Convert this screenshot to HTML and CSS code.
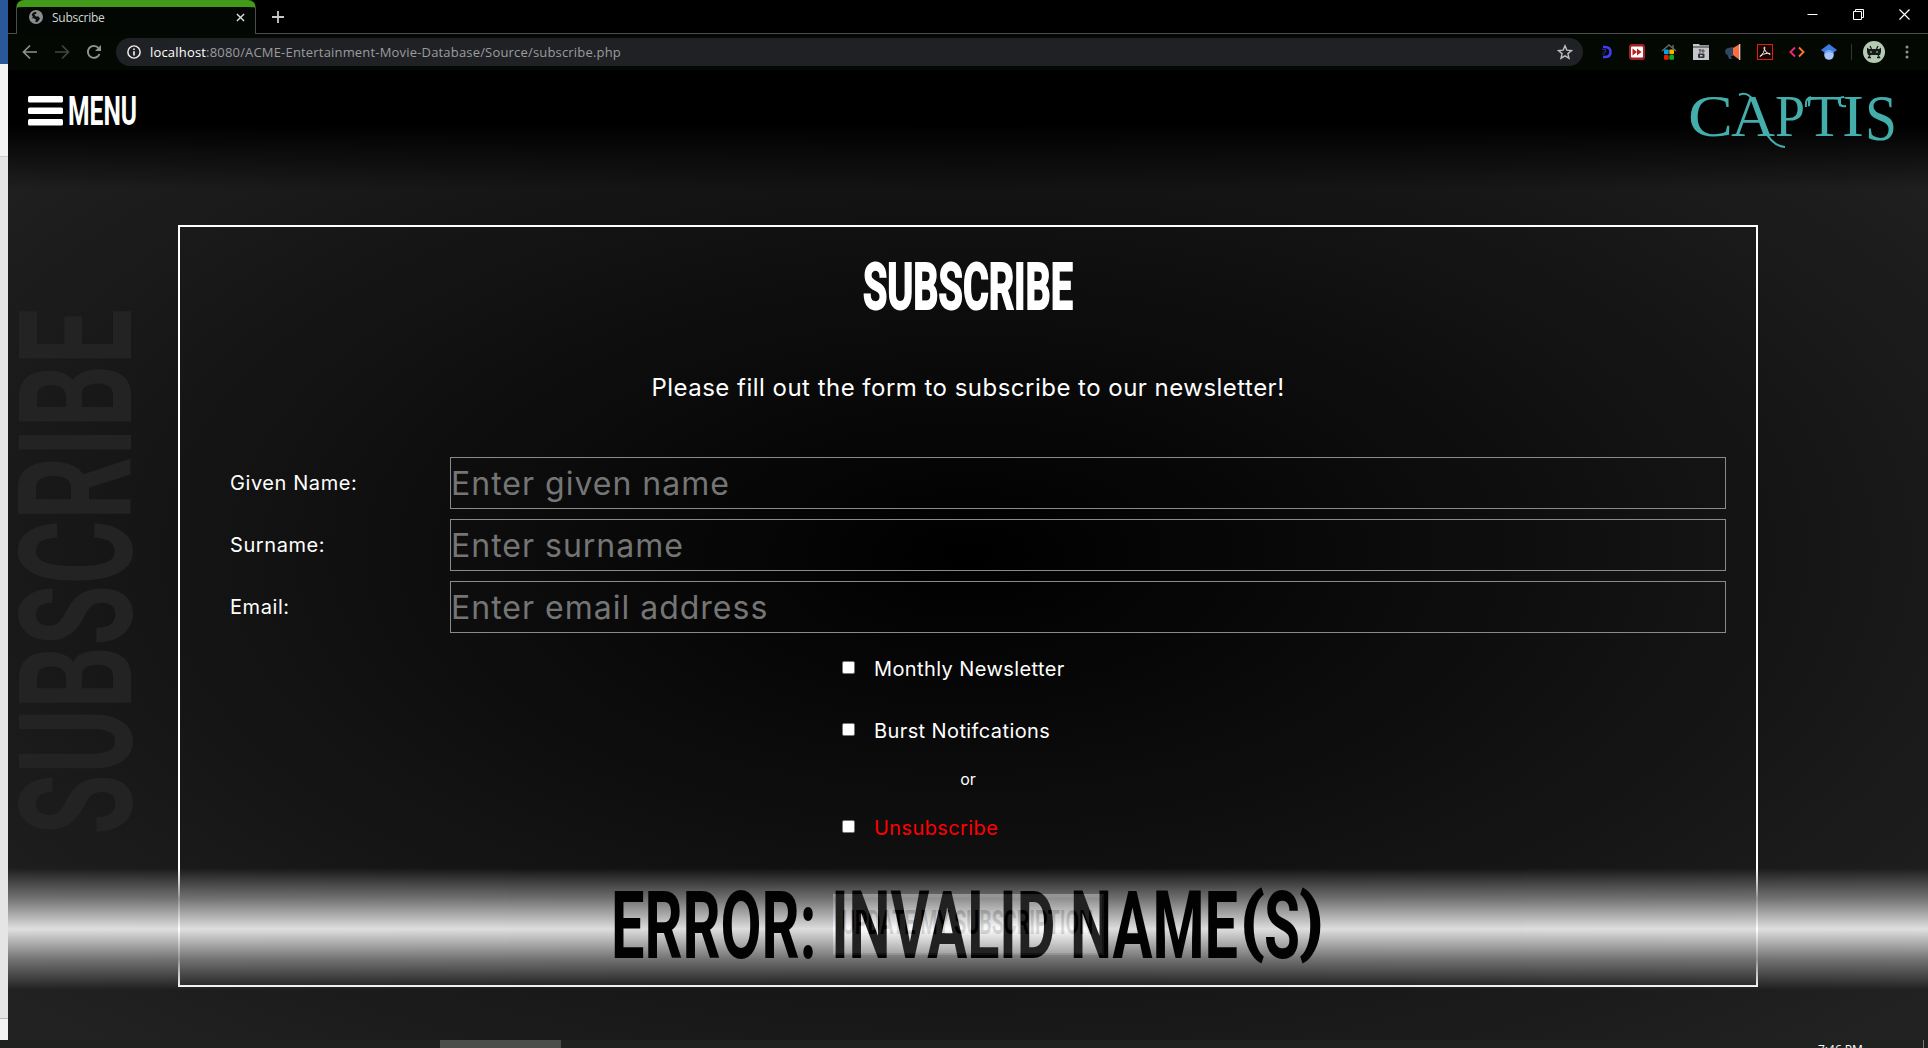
FILE: index.html
```html
<!DOCTYPE html>
<html lang="en">
<head>
<meta charset="utf-8">
<title>Subscribe</title>
<link rel="stylesheet" href="styles.css">
</head>
<body>
<div class="desktop">
  <div class="behind"><div class="behind-title"></div><div class="behind-ribbon"></div><div class="behind-doc"></div><div class="behind-status"></div></div>
  <div class="browser">
    <div class="tabstrip">
      <div class="tab">
        <svg class="globe" viewBox="0 0 16 16" width="14" height="14"><circle cx="8" cy="8" r="8" fill="#8b8d90"/><path d="M3 5Q4.500 2 8 2L8.500 4 6 5.500 8 7.500 11 7.500 12.500 10 10 13.500 7 14 8 11 5.500 9.500 3 9.500 4.500 8z" fill="#0c0f0c"/></svg>
        <span class="tab-title">Subscribe</span>
        <svg class="tab-x" viewBox="0 0 10 10" width="9" height="9"><path d="M1 1l8 8M9 1l-8 8" stroke="#ddd" stroke-width="1.600"/></svg>
      </div>
      <svg class="plus" viewBox="0 0 12 12" width="12" height="12"><path d="M6 0v12M0 6h12" stroke="#c8c8c8" stroke-width="1.800"/></svg>
      <div class="caption">
        <svg viewBox="0 0 11 11" width="11" height="11"><path d="M.5 5.500h10" stroke="#fff"/></svg>
        <svg viewBox="0 0 11 11" width="11" height="11"><path d="M.5 2.500h8v8h-8zM2.500 2.500v-2h8v8h-2" stroke="#fff" fill="none"/></svg>
        <svg viewBox="0 0 11 11" width="11" height="11"><path d="M.5 .5l10 10M10.500 .5l-10 10" stroke="#fff" stroke-width="1.200"/></svg>
      </div>
    </div>
    <div class="toolbar">
      <svg class="nav" viewBox="0 0 16 16" width="16" height="16"><path d="M15 8H2M8 1.500L1.500 8 8 14.500" stroke="#8f918f" stroke-width="1.700" fill="none"/></svg>
      <svg class="nav" viewBox="0 0 16 16" width="16" height="16"><path d="M1 8h13M8 1.500L14.500 8 8 14.500" stroke="#434543" stroke-width="1.700" fill="none"/></svg>
      <svg class="nav" viewBox="0 0 16 16" width="16" height="16"><path d="M13.500 10A6 6 0 1 1 12.500 4" stroke="#929492" stroke-width="1.900" fill="none"/><path d="M15 1v6H9z" fill="#929492"/></svg>
      <div class="omnibox">
        <svg viewBox="0 0 16 16" width="14" height="14"><circle cx="8" cy="8" r="7" fill="none" stroke="#eee" stroke-width="1.700"/><path d="M8 7v5M8 4v1.800" stroke="#eee" stroke-width="1.900"/></svg>
        <span class="url"><b>localhost</b>:8080/ACME-Entertainment-Movie-Database/Source/subscribe.php</span>
        <svg viewBox="0 0 16 16" width="16" height="16"><path d="M8 1.800l1.800 4.300 4.700.4-3.600 3.100 1.100 4.600L8 11.800l-4 2.400 1.100-4.600L1.500 6.500l4.700-.4z" fill="none" stroke="#bdbfc1" stroke-width="1.400"/></svg>
      </div>
      <div class="extensions">
        <svg viewBox="0 0 16 16" width="16" height="16"><path d="M6 3h2q5.500 0 5.500 5T8 13H6" fill="none" stroke="#3f3ff0" stroke-width="2.600"/><path d="M5 5.500h3.500v2.500H6M5 10h3" stroke="#2626a0" stroke-width="1.200" fill="none"/></svg>
        <svg viewBox="0 0 16 16" width="16" height="16"><rect width="16" height="16" rx="3" fill="#a31f21"/><rect x="2" y="2.500" width="12" height="11" rx="1" fill="#fff"/><path d="M3.500 4.500L8 8l-4.500 3.500zM8 4.500L12.500 8 8 11.500z" fill="#b32022"/></svg>
        <svg viewBox="0 0 16 16" width="16" height="16"><path d="M1 7l7-6 7 6M12 1v3" stroke="#666" stroke-width="1.500" fill="none"/><rect x="3" y="5.500" width="4.700" height="4.700" rx="1" fill="#00a5ee"/><rect x="8.300" y="5.500" width="4.700" height="4.700" rx="1" fill="#ffae00"/><rect x="3" y="11" width="4.700" height="4.700" rx="1" fill="#f01800"/><rect x="8.300" y="11" width="4.700" height="4.700" rx="1" fill="#00b423"/></svg>
        <svg viewBox="0 0 16 16" width="16" height="16"><path d="M0 0h6l1 1.200h9V16H0z" fill="#c5c5cb"/><path d="M0 3h16" stroke="#333"/><path d="M6 5l1 2V9M8 5L7 7M9 6h2v2H9z" stroke="#333" fill="none" stroke-width=".8"/><rect x="5" y="9.500" width="6.500" height="4.500" rx="1" fill="#333"/><path d="M7 11h2.500v1.500H7z" fill="#c5c5cb"/></svg>
        <svg viewBox="0 0 16 16" width="16" height="16"><path d="M8 3v9H6l1 3H4l-1.500-4Q0 10 0 7.500T3 4z" fill="#2f4560"/><path d="M8 4l6-3.500v15L8 11z" fill="#ff6b3d"/><path d="M14.700 0v16" stroke="#e8e8e8" stroke-width="1.200"/></svg>
        <svg viewBox="0 0 16 16" width="16" height="16"><rect x=".5" y=".5" width="15" height="15" fill="#180303" stroke="#e01f0b"/><path d="M3 12.500Q7.500 9 8 3.500 7 2 7 4.500 8.500 9 13 10.500 14 9 10.500 9.200 6 9.500 3 12.500z" stroke="#eee" fill="none"/></svg>
        <svg viewBox="0 0 16 16" width="16" height="16"><path d="M6 3.500L1.500 8 6 12.500" stroke="#f0277b" stroke-width="1.900" fill="none"/><path d="M10 3.500L14.500 8 10 12.500" stroke="#ff7424" stroke-width="1.900" fill="none"/></svg>
        <svg viewBox="0 0 16 16" width="16" height="16"><path d="M8 0l8 6-8 6-8-6z" fill="#3d7be0"/><circle cx="8" cy="11" r="4.800" fill="#a5c6fb"/><path d="M3.400 9.500a5 5 0 0 1 9.200 0L8 8z" fill="#6da0f4"/></svg>
      </div>
      <div class="divider"></div>
      <svg class="avatar" viewBox="0 0 22 22" width="22" height="22"><circle cx="11" cy="11" r="11" fill="#b4cbb3"/><path d="M4 6.500l2 1.500h10l2-1.500V11l-1 3H5l-1-3z" fill="#171a18"/><path d="M7 5l1.500 3M15 5l-1.500 3M7 14l-1.500 2.500H8M15 14l1.500 2.500H14" stroke="#171a18" stroke-width="1.300" fill="none"/><path d="M7 11h2M13 11h2" stroke="#7f9080" stroke-width="1.500"/></svg>
      <svg class="dots" viewBox="0 0 4 14" width="4" height="14"><g fill="#929492"><circle cx="2" cy="2" r="1.500"/><circle cx="2" cy="7" r="1.500"/><circle cx="2" cy="12" r="1.500"/></g></svg>
    </div>
    <main class="page">
      <header class="site-header">
        <a class="menu">
          <svg class="bars" viewBox="0 0 35 30" width="35" height="30"><g fill="#fff"><rect width="35" height="6.500" rx="1.500"/><rect y="11.500" width="35" height="6.500" rx="1.500"/><rect y="23" width="35" height="6.500" rx="1.500"/></g></svg>
          <svg class="display" width="70" height="30"><text x="0" y="29" font-size="41" textLength="69" lengthAdjust="spacingAndGlyphs">MENU</text></svg>
        </a>
        <svg class="logo" viewBox="0 0 210 60" width="210" height="60">
          <g class="logo-text"><text x="0" y="45" font-size="60" textLength="45" lengthAdjust="spacingAndGlyphs">C</text><text x="43" y="45" font-size="60" textLength="44" lengthAdjust="spacingAndGlyphs">A</text><text x="87" y="45" font-size="60" textLength="30" lengthAdjust="spacingAndGlyphs">P</text><text x="119" y="45" font-size="60" textLength="35" lengthAdjust="spacingAndGlyphs">T</text><text x="154" y="45" font-size="60" textLength="22" lengthAdjust="spacingAndGlyphs">I</text><text x="177" y="49" font-size="66" textLength="32" lengthAdjust="spacingAndGlyphs">S</text></g>
          <path class="swash" d="M51 4Q59 0 65 9M76 38Q84 55 97 56M123 6Q117 7 118 16M156 6Q150 6 151 11Q152 16 158 15"/>
        </svg>
      </header>
      <svg class="side-title display" width="126" height="530"><text transform="translate(122 525) rotate(-90)" font-size="157" textLength="526" lengthAdjust="spacingAndGlyphs">SUBSCRIBE</text></svg>
      <section class="card">
        <svg class="heading display" width="212" height="50"><text x="1" y="48" font-size="65" textLength="210" lengthAdjust="spacingAndGlyphs">SUBSCRIBE</text></svg>
        <p class="intro">Please fill out the form to subscribe to our newsletter!</p>
        <form class="form">
          <div class="row"><label class="l1">Given Name:</label><input class="p1" type="text" placeholder="Enter given name"></div>
          <div class="row"><label class="l2">Surname:</label><input class="p2" type="text" placeholder="Enter surname"></div>
          <div class="row"><label class="l3">Email:</label><input class="p3" type="text" placeholder="Enter email address"></div>
          <div class="checks">
            <div class="check"><i class="box"></i><span>Monthly Newsletter</span></div>
            <div class="check"><i class="box"></i><span>Burst Notifcations</span></div>
            <div class="or">or</div>
            <div class="check last"><i class="box"></i><span>Unsubscribe</span></div>
          </div>
          <button class="submit" type="button"><svg class="display dark" width="252" height="26"><text x="0" y="24" font-size="33" textLength="251" lengthAdjust="spacingAndGlyphs">UPDATE MY SUBSCRIPTION</text></svg></button>
        </form>
      </section>
      <div class="error"><svg class="display dark" width="712" height="90"><text x="-1" y="74" font-size="94" textLength="627" lengthAdjust="spacingAndGlyphs">ERROR: INVALID NAME</text><text class="paren" x="629" y="62" font-size="72" textLength="23" lengthAdjust="spacingAndGlyphs">(</text><text x="652" y="74" font-size="94" textLength="36" lengthAdjust="spacingAndGlyphs">S</text><text class="paren" x="688" y="62" font-size="72" textLength="23" lengthAdjust="spacingAndGlyphs">)</text></svg></div>
    </main>
  </div>
</div>
<div class="taskbar"><div class="task"></div><span class="clock">7:46 PM</span><div class="peek"></div></div>
</body>
</html>
```
FILE: styles.css
```css
* { box-sizing: border-box; }
body { margin: 0; width: 1928px; height: 1048px; overflow: hidden; background: #000; color: #fff; font-family: Inter, sans-serif; display: flex; flex-direction: column; }
svg { display: block; flex: none; }
.desktop { display: flex; height: 1040px; }
.behind { width: 8px; display: flex; flex-direction: column; background: #e5e5e5; }
.behind-title { height: 64px; background: #2a579a; }
.behind-ribbon { height: 93px; background: #f3f3f3; border-bottom: 1px solid #ccc; }
.behind-doc { flex: 1; }
.behind-status { height: 22px; background: #f3f3f3; border-top: 1px solid #bbb; }
.browser { width: 1920px; display: flex; flex-direction: column; }

.tabstrip { height: 34px; display: flex; border-bottom: 1px solid #4b4d4b; padding-left: 8px; background: #000; }
.tab { width: 240px; height: 34px; border: 1px solid #4b4d4b; border-top: 7px solid #419a1a; border-bottom: 0; border-radius: 8px 8px 0 0; background: #030703; display: flex; align-items: center; padding: 0 10px 7px 12px; }
.tab-title { flex: 1; margin-left: 9px; font: 12px "Open Sans", sans-serif; letter-spacing: -.25px; color: #d5d7d5; }
.plus { margin: 11px 0 0 16px; }
.caption { margin-left: auto; display: flex; gap: 35px; padding: 9px 18px 0 0; }

.toolbar { height: 36px; display: flex; align-items: center; background: #030803; padding-left: 14px; }
.nav { margin-right: 16px; }
.omnibox { width: 1467px; height: 28px; margin-left: -2px; border-radius: 14px; background: #202124; display: flex; align-items: center; padding: 0 10px 0 11px; }
.url { flex: 1; margin-left: 9px; font: 13px "Open Sans", sans-serif; letter-spacing: .18px; color: #9a9c9f; }
.url b { font-weight: 400; color: #fff; }
.extensions { display: flex; gap: 16px; margin-left: 14px; }
.divider { width: 1px; height: 16px; background: #333533; margin: 0 11px 0 14px; }
.dots { margin-left: 20px; }

.page { position: relative; height: 970px; background: radial-gradient(#000, #232323); display: flex; flex-direction: column; }
.site-header { height: 155px; display: flex; justify-content: space-between; background: linear-gradient(#000 0, #000 55px, transparent 120px); padding: 26px 30px 0 20px; }
.menu { display: flex; gap: 5px; height: 30px; }
.display { font-family: Roboto, sans-serif; font-weight: 700; fill: #fff; overflow: visible; }
.dark { fill: #000; }
.heading { stroke: #fff; stroke-width: 2; }
.paren { stroke: #000; stroke-width: 2; }
.logo { margin: -5px 0 0; overflow: visible; }
.logo-text { font-family: "Liberation Serif", serif; fill: #43aeac; }
.swash { fill: none; stroke: #43aeac; stroke-width: 2; }
.side-title { position: absolute; left: 1px; top: 240px; fill: #232323; }
.card { width: 1580px; height: 762px; margin-left: 170px; border: 2px solid #fff; display: flex; flex-direction: column; align-items: center; padding-top: 34px; }
.intro { margin: 60px 0 0; height: 36px; line-height: 34px; font-size: 24px; white-space: nowrap; letter-spacing: .48px; }
.form { width: 100%; margin-top: 50px; padding: 0 30px 0 50px; display: flex; flex-direction: column; gap: 10px; }
.row { display: flex; align-items: center; height: 52px; }
.row label { width: 220px; font-size: 20px; letter-spacing: .58px; }
.row input { flex: 1; height: 52px; background: transparent; border: 1px solid #8a8a8a; padding: 0; font: 32px Inter, sans-serif; letter-spacing: 1px; color: #fff; }
.row input::placeholder { color: #757575; opacity: 1; }
.checks { width: 260px; margin-left: 612px; display: flex; flex-direction: column; }
.check { height: 52px; display: flex; align-items: center; margin-bottom: 10px; font-size: 20px; letter-spacing: .4px; white-space: nowrap; }
.box { width: 13px; height: 13px; margin: 0 19px 3px 0; background: #fff; border: 1px solid #767676; border-radius: 2px; }
.or { width: 252px; height: 25px; line-height: 25px; font-size: 16px; text-align: center; margin-bottom: 10px; }
.last { margin-bottom: 0; color: #f00; }
.submit { width: 271px; height: 61px; margin: 30px 0 0 603px; padding: 0 0 4px 7px; border: 2px outset #ddd; background: #eee; }
.error { position: absolute; left: 0; right: 0; top: 798px; height: 122px; display: flex; justify-content: center; align-items: center; opacity: .86; background: linear-gradient(transparent, #808080 25%, #fff 50%, #808080 75%, transparent); }

.taskbar { height: 8px; background: #20221f; display: flex; overflow: hidden; }
.task { width: 121px; margin-left: 440px; background: #4b4d4b; }
.clock { margin-left: 1257px; font: 12px/14px "Open Sans", sans-serif; margin-top: 3px; white-space: nowrap; }
.peek { margin-left: auto; width: 5px; border-left: 1px solid #777; }
```
